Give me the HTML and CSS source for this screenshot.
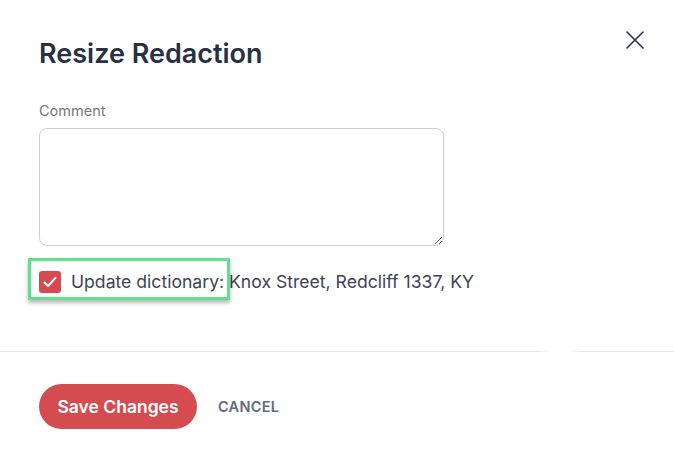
FILE: index.html
```html
<!DOCTYPE html>
<html lang="en">
<head>
<meta charset="utf-8">
<title>Resize Redaction</title>
<link rel="stylesheet" href="styles.css">
</head>
<body>
<div class="dialog">
  <div class="content">
    <div class="header">
      <h1 class="title">Resize Redaction</h1>
      <button class="close" aria-label="Close">
        <svg width="18" height="18" viewBox="0 0 18 18" fill="none" stroke="#283044" stroke-width="1.6" stroke-linecap="round">
          <path d="M1 1L17 17M17 1L1 17"/>
        </svg>
      </button>
    </div>
    <label class="label" for="comment">Comment</label>
    <textarea id="comment" class="textarea"></textarea>
    <div class="check-row">
      <span class="checkbox">
        <svg width="14" height="12" viewBox="0 0 14 12" fill="none" stroke="#fff" stroke-width="2" stroke-linecap="round" stroke-linejoin="round">
          <path d="M1.5 6.5L5 10L12.5 1.8"/>
        </svg>
      </span>
      <span class="check-text">Update dictionary: Knox Street, Redcliff 1337, KY</span>
      <span class="highlight"></span>
    </div>
  </div>
  <div class="divider"></div>
  <div class="footer">
    <button class="btn-primary">Save Changes</button>
    <button class="btn-cancel">CANCEL</button>
  </div>
</div>
</body>
</html>
```

FILE: styles.css
```css
html, body {
  margin: 0;
  padding: 0;
  background: #ffffff;
}

body {
  font-family: Inter, "Noto Sans", "Liberation Sans", sans-serif;
  width: 674px;
  height: 460px;
  overflow: hidden;
}

.dialog {
  display: flex;
  flex-direction: column;
}

.content {
  display: flex;
  flex-direction: column;
  padding: 31px 30px 0 39px;
}

.header {
  display: flex;
  justify-content: space-between;
  align-items: flex-start;
}

.title {
  margin: 7px 0 0 0;
  font-size: 27px;
  line-height: 32px;
  font-weight: 600;
  color: #283044;
}

.close {
  border: 0;
  background: none;
  padding: 0;
  width: 18px;
  height: 18px;
  display: flex;
  cursor: pointer;
}

.label {
  margin-top: 31px;
  font-size: 14.5px;
  line-height: 20px;
  color: #737884;
}

.textarea {
  margin-top: 7px;
  box-sizing: border-box;
  width: 405px;
  height: 118px;
  border: 1px solid #cdcfd5;
  border-radius: 8px;
  background: #fff;
  resize: both;
  font-family: inherit;
  font-size: 14px;
  padding: 8px 12px;
}

.check-row {
  position: relative;
  margin-top: 25px;
  display: flex;
  align-items: center;
  gap: 10px;
  height: 22px;
}

.checkbox {
  width: 22px;
  height: 22px;
  border-radius: 3px;
  background: #d44c4f;
  display: flex;
  align-items: center;
  justify-content: center;
  flex: none;
}

.check-text {
  font-size: 17.6px;
  line-height: 22px;
  color: #3d4354;
  white-space: nowrap;
}

.highlight {
  position: absolute;
  left: -11px;
  top: -13px;
  width: 202px;
  height: 42px;
  box-sizing: border-box;
  border: 3px solid #5fe08f;
  box-shadow: 0 3px 4px rgba(0, 0, 0, 0.28);
  pointer-events: none;
}

.divider {
  margin-top: 58px;
  height: 1px;
  width: 674px;
  background: linear-gradient(to right, #e4e5ea 0, #e4e5ea 535px, rgba(228,229,234,0) 552px, rgba(228,229,234,0) 568px, #e4e5ea 585px, #e4e5ea 674px);
}

.footer {
  display: flex;
  align-items: center;
  padding: 32px 0 0 39px;
}

.btn-primary {
  height: 45px;
  width: 158px;
  border: 0;
  border-radius: 23px;
  background: #d44c4f;
  color: #ffffff;
  font-family: inherit;
  font-size: 17.5px;
  font-weight: 600;
  padding: 0;
  cursor: pointer;
}

.btn-cancel {
  margin-left: 21px;
  border: 0;
  background: none;
  padding: 0;
  font-family: inherit;
  font-size: 14.5px;
  font-weight: 600;
  letter-spacing: 0.3px;
  color: #646b7a;
  cursor: pointer;
}
```
